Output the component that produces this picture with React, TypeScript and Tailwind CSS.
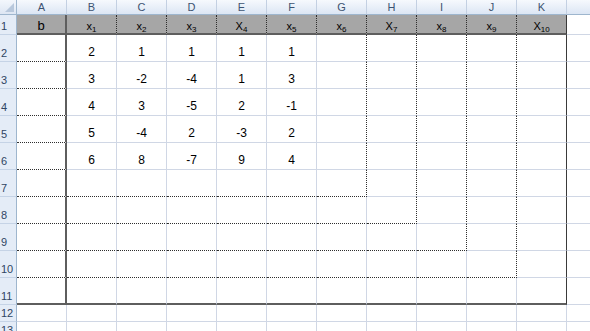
import React from 'react';

const COLS = ['A', 'B', 'C', 'D', 'E', 'F', 'G', 'H', 'I', 'J', 'K', 'L'];

// border pieces, written out in full so tailwind sees them
const GRID_R = 'border-r border-r-[#d0d7e5]';
const GRID_B = 'border-b border-b-[#d0d7e5]';
const DARK_R = 'border-r border-r-[#3a3a3a]';
const THICK_R = 'border-r-2 border-r-[#5e5e5e]';
const THICK_B = 'border-b-2 border-b-[#5e5e5e]';
const DOT_R = 'border-r border-r-[#2e2e2e] [border-right-style:dotted]';
const DOT_B = 'border-b border-b-[#2e2e2e] [border-bottom-style:dotted]';

// where each staircase column stops (row index of its last dotted cell)
const STEP_LAST_ROW: Record<number, number> = { 6: 7, 7: 8, 8: 9, 9: 10 };

const rightBorder = (row: number, col: number) => {
  if (row >= 1 && row <= 11) {
    if (col === 0) return THICK_R;
    if (col === 10) return DARK_R;
    if (row === 1 && col < 10) return DOT_R;
    if (STEP_LAST_ROW[col] && row <= STEP_LAST_ROW[col]) return DOT_R;
  }
  return GRID_R;
};

const bottomBorder = (row: number, col: number) => {
  if ((row === 1 || row === 11) && col <= 10) return THICK_B;
  if (row >= 2 && row <= 6 && col === 0) return DOT_B;
  if (row >= 7 && row <= 10 && col <= row - 1) return DOT_B;
  return GRID_B;
};

const VALUES: number[][] = [
  [2, 1, 1, 1, 1],
  [3, -2, -4, 1, 3],
  [4, 3, -5, 2, -1],
  [5, -4, 2, -3, 2],
  [6, 8, -7, 9, 4],
];

// x labels as they appear in row 1 (some typed with a capital X)
const VARS = [
  { v: 'x', n: '1' },
  { v: 'x', n: '2' },
  { v: 'x', n: '3' },
  { v: 'X', n: '4' },
  { v: 'x', n: '5' },
  { v: 'x', n: '6' },
  { v: 'X', n: '7' },
  { v: 'x', n: '8' },
  { v: 'x', n: '9' },
  { v: 'X', n: '10' },
];

function CellContent({ row, col }: { row: number; col: number }) {
  if (row === 1) {
    if (col === 0) return <span className="text-[13px] leading-[15px]">b</span>;
    const label = VARS[col - 1];
    if (!label) return null;
    return (
      <span className="text-[11px] leading-[14px]">
        {label.v}
        <sub className="text-[8px] leading-none">{label.n}</sub>
      </span>
    );
  }
  if (row >= 2 && row <= 6 && col >= 1 && col <= 5) {
    return <span className="text-[12px] leading-[14px]">{VALUES[row - 2][col - 1]}</span>;
  }
  return null;
}

export default function App() {
  const rows = Array.from({ length: 13 }, (_, i) => i + 1);

  return (
    <div
      className="w-[590px] h-[331px] overflow-hidden bg-white text-black"
      style={{ fontFamily: '"Liberation Sans", Arial, sans-serif' }}
    >
      <div className="grid grid-cols-[17px_repeat(12,50px)] grid-rows-[15px_20px_repeat(10,27px)_17px_17px] w-[617px]">
        {/* corner */}
        <div className="relative bg-gradient-to-b from-[#f3f7fc] to-[#dde6f3] border-r border-b border-[#9eb6ce]">
          <svg className="absolute right-[2px] bottom-[2px]" width="9" height="9" viewBox="0 0 9 9">
            <polygon points="9,0 9,9 0,9" fill="#b8c8dc" />
          </svg>
        </div>

        {/* column letters, L sits past the right edge of the window */}
        {COLS.map(c => (
          <div
            key={c}
            className="flex items-center justify-center bg-gradient-to-b from-[#f6f9fd] to-[#dce6f4] border-r border-r-[#c3d0e2] border-b border-b-[#9eb6ce] text-[11px] leading-none text-[#3d5372]"
          >
            {c !== 'L' && c}
          </div>
        ))}

        {rows.map(row => (
          <React.Fragment key={row}>
            <div className="flex items-end pl-[1px] pb-[1px] bg-[#e4ecf7] border-r border-r-[#9eb6ce] border-b border-b-[#c5d3e6] text-[11px] leading-[14px] text-[#2f4563]">
              {row}
            </div>
            {COLS.map((c, col) => (
              <div
                key={c}
                className={`flex items-end justify-center ${row === 1 && col <= 10 ? 'bg-[#a6a6a6] items-center' : 'pb-[2px]'} ${rightBorder(row, col)} ${bottomBorder(row, col)}`}
              >
                <CellContent row={row} col={col} />
              </div>
            ))}
          </React.Fragment>
        ))}
      </div>
    </div>
  );
}
